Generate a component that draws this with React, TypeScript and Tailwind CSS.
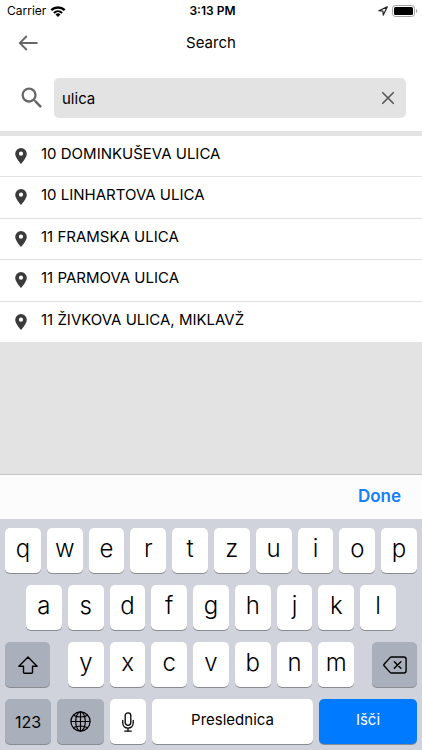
import React, { useState } from 'react';
import { MdSearch } from 'react-icons/md';

const RESULTS = [
  '10 DOMINKUŠEVA ULICA',
  '10 LINHARTOVA ULICA',
  '11 FRAMSKA ULICA',
  '11 PARMOVA ULICA',
  '11 ŽIVKOVA ULICA, MIKLAVŽ',
];

const TOP_KEYS = ['q', 'w', 'e', 'r', 't', 'z', 'u', 'i', 'o', 'p'];
const HOME_KEYS = ['a', 's', 'd', 'f', 'g', 'h', 'j', 'k', 'l'];
const BOTTOM_KEYS = ['y', 'x', 'c', 'v', 'b', 'n', 'm'];

interface KeyProps {
  className: string;
  label?: string;
  onClick?: () => void;
  children: React.ReactNode;
}

const Key: React.FC<KeyProps> = ({ className, label, onClick, children }) => (
  <button
    type="button"
    aria-label={label}
    onClick={onClick}
    className={`flex h-[45px] items-center justify-center rounded-[5px] shadow-[0_1px_0_#898b90] ${className}`}
  >
    {children}
  </button>
);

const LetterKey: React.FC<{ letter: string; onType: (letter: string) => void }> = ({ letter, onType }) => (
  <Key className="min-w-0 flex-1 bg-white pb-[3px] text-2xl font-[350]" onClick={() => onType(letter)}>
    {letter}
  </Key>
);

const StatusBar = () => (
  <div className="grid h-[22px] grid-cols-3 items-center pl-[7px] pr-1 text-xs">
    <div className="flex items-center gap-1">
      <span>Carrier</span>
      <svg className="h-[11px] w-4" viewBox="0 0 16 11" aria-hidden="true">
        <path d="M1.3 4.2a9.6 9.6 0 0 1 13.4 0" fill="none" stroke="#000" strokeWidth="2.4" />
        <path d="M3.9 6.9a6 6 0 0 1 8.2 0" fill="none" stroke="#000" strokeWidth="2.1" />
        <path d="M8 11 5.5 8.5a3.6 3.6 0 0 1 5 0z" />
      </svg>
    </div>
    <span className="text-center font-semibold">3:13 PM</span>
    <div className="flex items-center justify-end gap-1">
      <svg className="h-[10px] w-[10px]" viewBox="0 0 10 10" fill="none" stroke="#222" strokeWidth="1.2" strokeLinejoin="round" aria-hidden="true">
        <path d="M9.2.9.9 4.7l4 .4.4 4z" />
      </svg>
      <svg className="h-3 w-[26px]" viewBox="0 0 26 12" aria-hidden="true">
        <rect x=".5" y=".5" width="22" height="11" rx="3" fill="#fff" stroke="#a3a3a3" />
        <rect x="2" y="2" width="19" height="8" rx="1.5" />
        <path d="M24 4v4c1.6-.6 1.6-3.4 0-4z" fill="#a3a3a3" />
      </svg>
    </div>
  </div>
);

const PinIcon = () => (
  <svg className="mt-3 h-4 w-3 shrink-0" viewBox="0 0 12 16" fill="#3b3b3b" aria-hidden="true">
    <path fillRule="evenodd" d="M6 0A5.8 5.8 0 0 0 .2 5.8C.2 10 6 16 6 16s5.8-6 5.8-10.2A5.8 5.8 0 0 0 6 0zm0 3.600a2.100 2.100 0 1 1 0 4.200 2.100 2.100 0 0 1 0-4.200z" />
  </svg>
);

export default function App() {
  const [query, setQuery] = useState('ulica');
  const type = (letter: string) => setQuery((q) => q + letter);

  return (
    <div className="flex min-h-screen flex-col bg-[#e3e3e3] font-['Inter',sans-serif] text-black">
      <header className="bg-white">
        <StatusBar />
        <div className="grid h-[42px] grid-cols-3 items-center px-[18px]">
          <button type="button" aria-label="Back" className="flex h-6 w-6 items-center">
            <svg className="h-4 w-5" viewBox="0 0 20 16" fill="none" stroke="#666" strokeWidth="1.8" aria-hidden="true">
              <path d="M19.5 8H2M8.800 1 1.800 8l7 7" />
            </svg>
          </button>
          <h1 className="text-center text-[15px]">Search</h1>
        </div>
        <div className="flex items-center gap-2 pt-[14px] pr-4 pb-[13px] pl-[18px]">
          <MdSearch className="h-7 w-7 shrink-0 text-[#666]" aria-hidden="true" />
          <div className="flex h-10 min-w-0 flex-1 items-center rounded-[5px] bg-[#e3e3e3] pr-[11px] pl-2">
            <input
              type="text"
              aria-label="Search"
              value={query}
              onChange={(e) => setQuery(e.target.value)}
              className="h-full min-w-0 flex-1 bg-transparent text-[15px] outline-none"
            />
            <button type="button" aria-label="Clear" onClick={() => setQuery('')}>
              <svg className="h-[14px] w-[14px]" viewBox="0 0 14 14" fill="none" stroke="#555" strokeWidth="1.6" aria-hidden="true">
                <path d="m1.300 1.300 11.400 11.400M12.700 1.300 1.300 12.700" />
              </svg>
            </button>
          </div>
        </div>
      </header>

      <ul className="mt-[5px] grid h-[207px] grid-rows-5 bg-white">
        {RESULTS.map((result) => (
          <li key={result} className="border-b border-[#e3e3e3]">
            <button type="button" className="flex h-full w-full items-start gap-[14px] pl-[15px] text-left">
              <PinIcon />
              <span className="mt-2 text-[15px] leading-5">{result}</span>
            </button>
          </li>
        ))}
      </ul>

      <div className="mt-auto">
        <div className="flex h-[45px] items-center justify-end border-t border-[#c8c8c8] bg-[#fdfcfd] px-[21px]">
          <button type="button" className="text-[17px] font-semibold text-[#157efb]">
            Done
          </button>
        </div>
        <div className="flex flex-col gap-3 bg-[#d0d3db] px-[5px] pt-[9px] pb-[6px]">
          <div className="flex gap-[6px]">
            {TOP_KEYS.map((letter) => (
              <LetterKey key={letter} letter={letter} onType={type} />
            ))}
          </div>
          <div className="flex gap-[6px] px-[21px]">
            {HOME_KEYS.map((letter) => (
              <LetterKey key={letter} letter={letter} onType={type} />
            ))}
          </div>
          <div className="flex gap-[18px]">
            <Key className="w-[45px] bg-[#a9afbb]" label="Shift">
              <svg className="h-[18px] w-5" viewBox="0 0 20 18" fill="none" stroke="#000" strokeWidth="1.4" strokeLinejoin="round" aria-hidden="true">
                <path d="M10 1 .9 10.200h4.600v6.100c0 .6.400 1 1 1h7c.6 0 1-.4 1-1v-6.100h4.600z" />
              </svg>
            </Key>
            <div className="flex min-w-0 flex-1 gap-[6px]">
              {BOTTOM_KEYS.map((letter) => (
                <LetterKey key={letter} letter={letter} onType={type} />
              ))}
            </div>
            <Key className="w-[45px] bg-[#a9afbb]" label="Delete" onClick={() => setQuery((q) => q.slice(0, -1))}>
              <svg className="h-[18px] w-6" viewBox="0 0 24 18" fill="none" stroke="#000" strokeWidth="1.4" strokeLinejoin="round" strokeLinecap="round" aria-hidden="true">
                <path d="M8.500 1h12.300c1.400 0 2.300.9 2.300 2.300v11.400c0 1.400-.9 2.300-2.300 2.300H8.500c-.6 0-1-.2-1.400-.6L1.300 10c-.6-.6-.6-1.400 0-2l5.800-6.400c.4-.4.8-.6 1.400-.6z" />
                <path d="m11.300 5.700 6.600 6.600M17.900 5.700l-6.600 6.600" />
              </svg>
            </Key>
          </div>
          <div className="flex gap-[6px]">
            <Key className="w-[46px] bg-[#a9afbb] text-base">123</Key>
            <Key className="w-[47px] bg-[#a9afbb]" label="Next keyboard">
              <svg className="h-[21px] w-[21px]" viewBox="0 0 21 21" fill="none" stroke="#000" strokeWidth="1.2" aria-hidden="true">
                <circle cx="10.5" cy="10.5" r="9.6" />
                <ellipse cx="10.5" cy="10.5" rx="4.8" ry="9.6" />
                <path d="M10.500.9v19.200M.9 10.500h19.200M3.300 4.200c4 2.400 10.400 2.400 14.400 0M3.300 16.800c4-2.400 10.400-2.400 14.400 0" />
              </svg>
            </Key>
            <Key className="w-9 bg-white" label="Dictate">
              <svg className="h-5 w-3" viewBox="0 0 12 20" fill="none" stroke="#000" strokeWidth="1.3" strokeLinecap="round" aria-hidden="true">
                <rect x="3.2" y=".8" width="5.6" height="12.6" rx="2.8" />
                <path d="M.8 8.500v2.600c0 2.900 2.200 5 5.200 5s5.200-2.100 5.200-5V8.500M6 16.100v3M2.800 19.200h6.400" />
              </svg>
            </Key>
            <Key className="min-w-0 flex-1 bg-white pb-[3px] text-[15px]" onClick={() => type(' ')}>
              Preslednica
            </Key>
            <Key className="w-[98px] bg-[#007aff] pb-[3px] text-[15px] text-white">Išči</Key>
          </div>
        </div>
      </div>
    </div>
  );
}
